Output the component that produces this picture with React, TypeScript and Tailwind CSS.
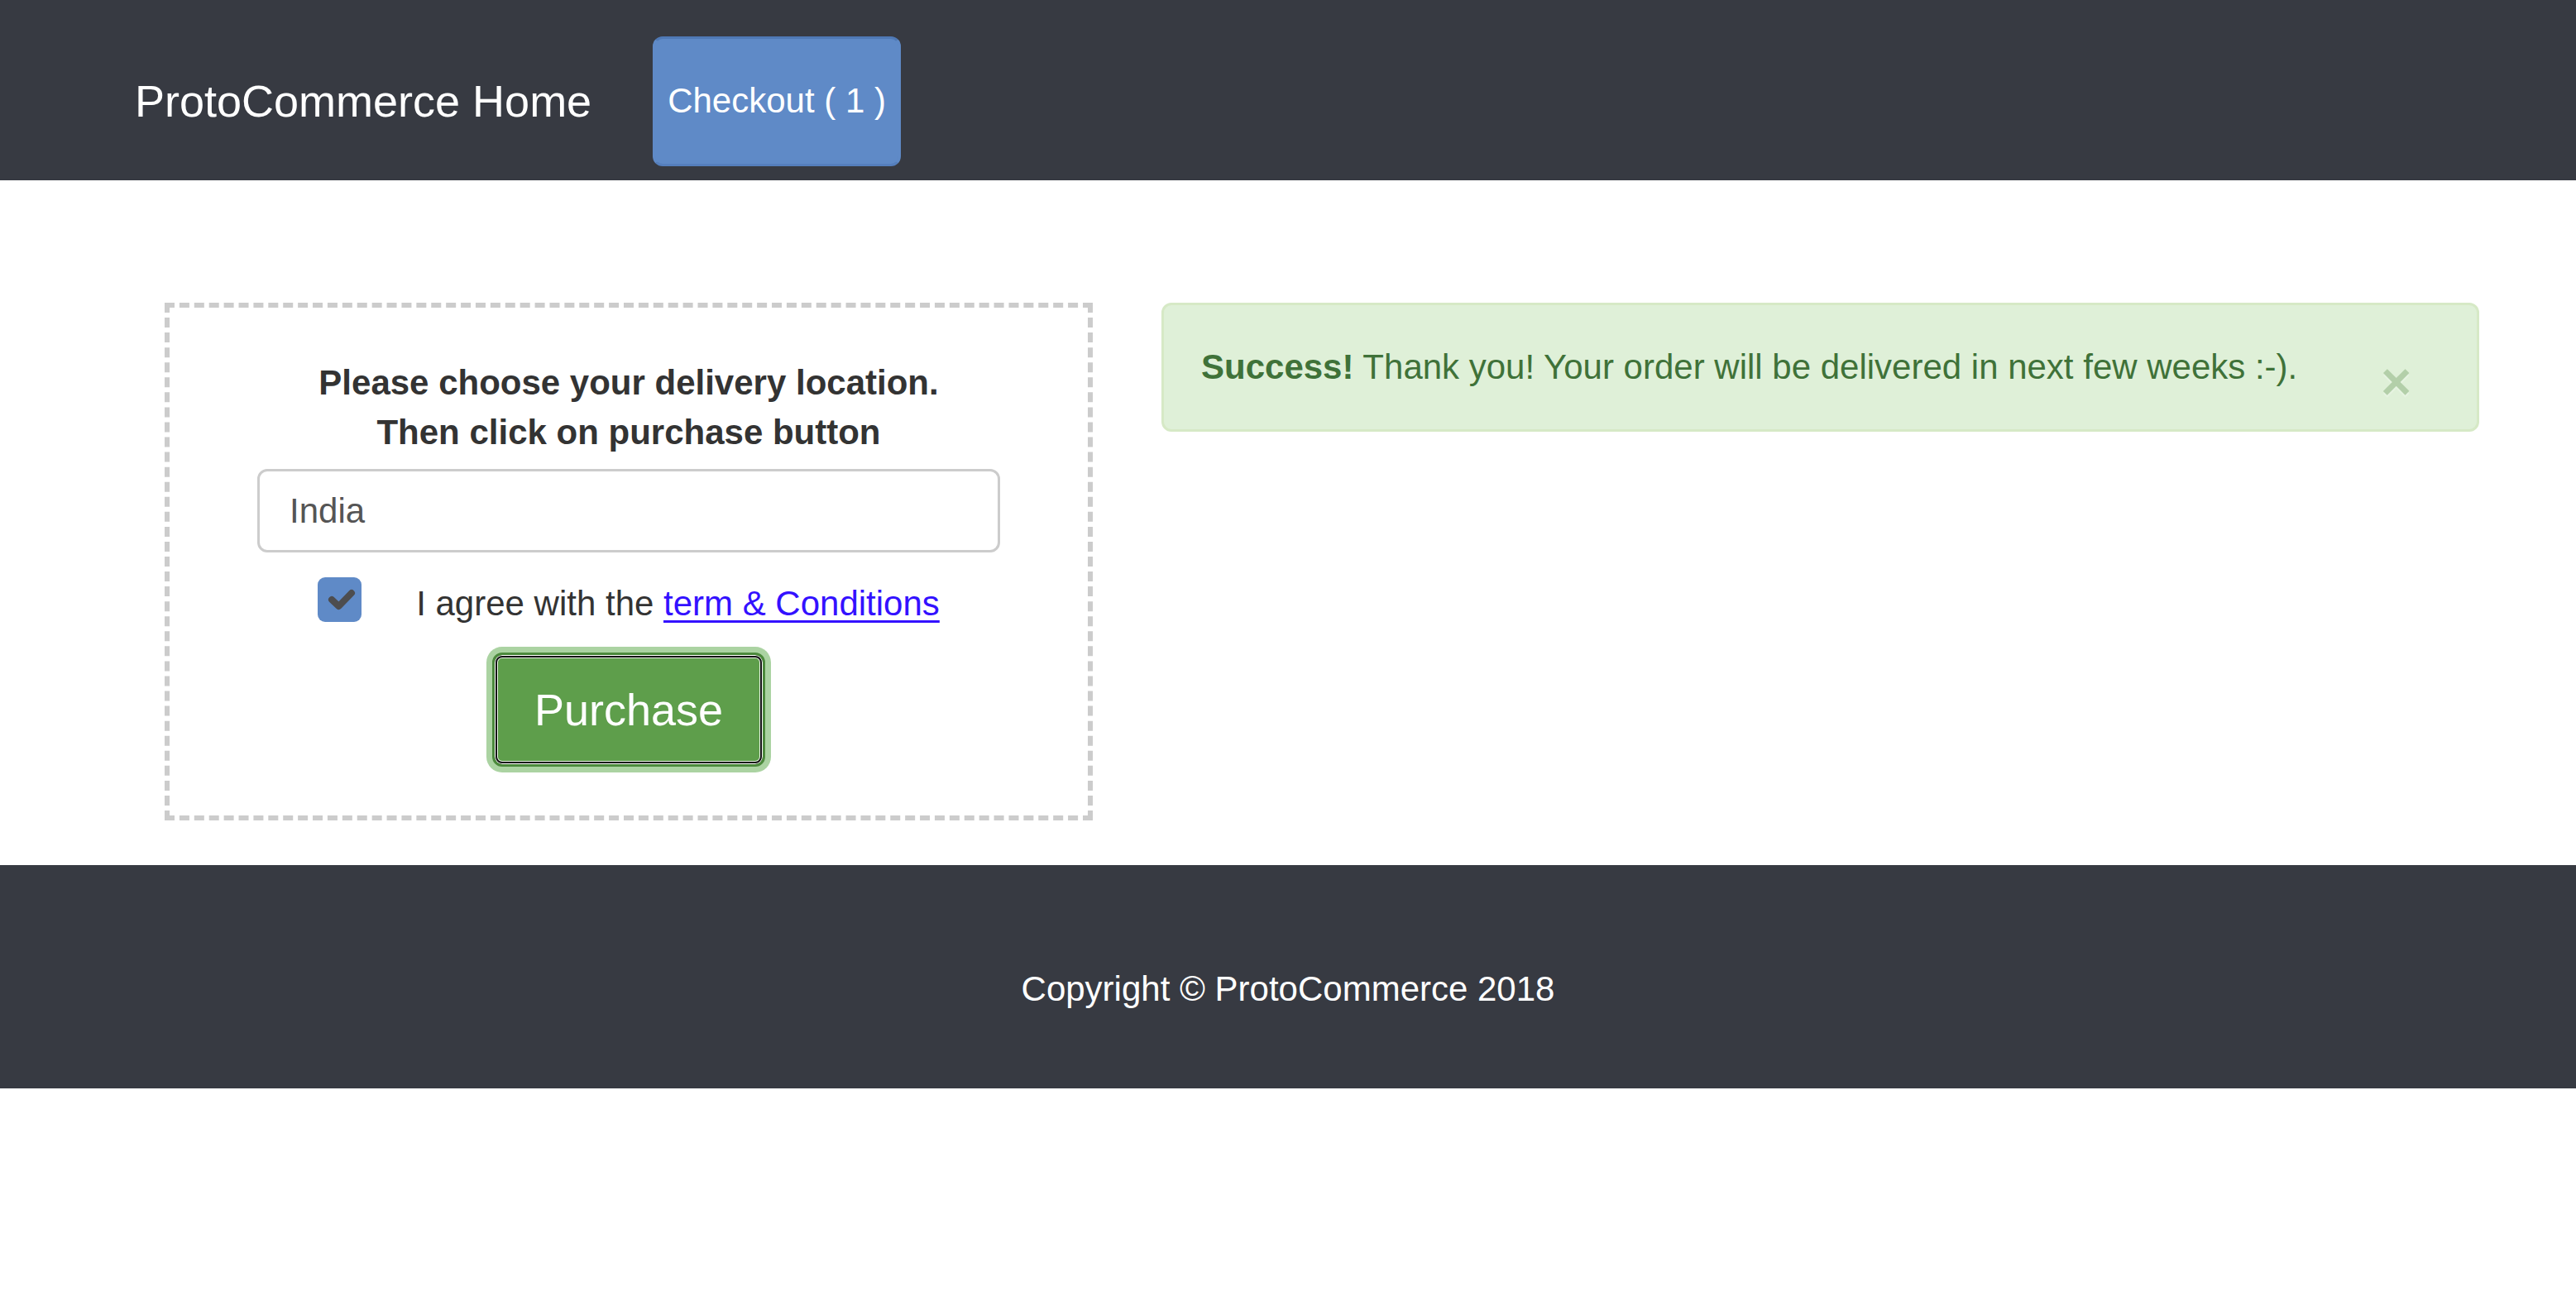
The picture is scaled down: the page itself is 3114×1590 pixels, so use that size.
export default function App() {
  return (
    <div className="min-h-screen bg-white font-['Liberation_Sans',Arial,sans-serif] text-[#333]">
      {/* top bar */}
      <nav className="h-[218px] bg-[#373a42] flex items-center pt-[26px] pl-[163px]">
        <span className="text-white text-[54px] leading-none">ProtoCommerce Home</span>
        <button className="ml-[74px] h-[157px] px-[15px] flex items-center border-[3px] border-[#5f8ac7] border-t-[#4f79b6] border-b-[#557fbd] rounded-[12px] bg-[#5f8ac7] text-white text-[42px] leading-none">
          Checkout ( 1 )
        </button>
      </nav>

      {/* content */}
      <main className="flex items-start pt-[148px] pb-[54px] pl-[199px]">
        {/* delivery form */}
        <div className="w-[1122px] border-[6px] border-dashed border-[#ccc] pt-[61px] pb-[59px] flex flex-col items-center">
          <p className="text-[42px] leading-[60px] font-bold text-center">
            Please choose your delivery location.
            <br />
            Then click on purchase button
          </p>
          <input
            readOnly
            value="India"
            className="mt-[14px] w-[898px] h-[101px] border-[3px] border-[#ccc] rounded-[12px] px-[36px] text-[42px] text-[#555] outline-none"
          />
          <div className="mt-[30px] flex items-start gap-[66px]">
            <div className="w-[53px] h-[54px] rounded-[9px] bg-[#5f8ac7] flex items-center justify-center">
              <svg width="53" height="54" viewBox="0 0 53 54">
                <path d="M17 27 L25.5 35 L41 19" fill="none" stroke="#4d4d4f" strokeWidth="8" strokeLinecap="round" strokeLinejoin="round" />
              </svg>
            </div>
            <p className="text-[42px] leading-[60px] mt-[2px]">
              I agree with the{" "}
              <a href="#" className="text-[#3311ff] underline decoration-[3px] underline-offset-[6px]">
                term &amp; Conditions
              </a>
            </p>
          </div>
          <button className="mt-[29px] w-[330px] h-[138px] border-[3px] border-[#4c8a3c] rounded-[12px] bg-[#5e9e4b] text-white text-[54px] leading-none shadow-[0_0_0_7px_#abd3a2,inset_0_0_0_1px_#fff,inset_0_0_0_3px_#111,inset_0_0_0_4px_#e8f2e4]">
            Purchase
          </button>
        </div>

        {/* success message */}
        <div className="ml-[83px] w-[1593px] h-[156px] border-[3px] border-[#d6e9c6] bg-[#dff0d8] rounded-[12px] pl-[45px] pr-[79px] flex items-center justify-between text-[#3f7239] text-[42px] leading-[60px]">
          <p>
            <b>Success!</b> Thank you! Your order will be delivered in next few weeks :-).
          </p>
          <span className="mt-[34px] text-[63px] font-bold leading-none text-[#b3cfa9] [text-shadow:0_3px_0_#e6f3e1]">×</span>
        </div>
      </main>

      {/* footer */}
      <footer className="bg-[#373a42] pt-[120px] pb-[90px] text-center text-white text-[42px] leading-[60px]">
        Copyright © ProtoCommerce 2018
      </footer>
    </div>
  );
}
